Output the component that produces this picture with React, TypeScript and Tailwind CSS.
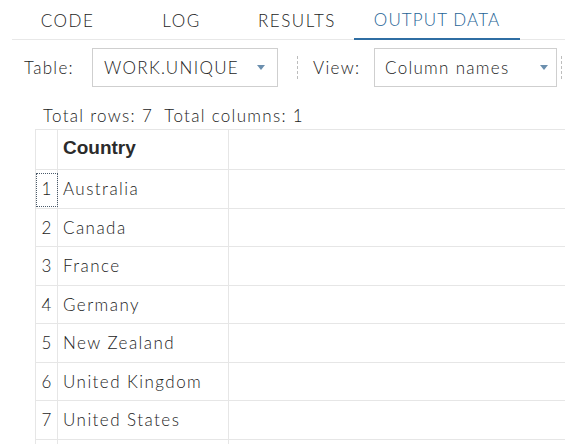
import React from "react";

const rows = [
  "Australia",
  "Canada",
  "France",
  "Germany",
  "New Zealand",
  "United Kingdom",
  "United States",
];

function Arrow() {
  return (
    <svg width="8" height="5" viewBox="0 0 8 5" className="block">
      <path d="M0 0 L8 0 L4 5 Z" fill="#6b8fae" />
    </svg>
  );
}

export default function App() {
  const tabs = [
    { label: "CODE", w: "w-[111px]" },
    { label: "LOG", w: "w-[117px]" },
    { label: "RESULTS", w: "w-[114px]" },
    { label: "OUTPUT DATA", w: "w-[166px]", active: true },
  ];
  return (
    <div
      className="w-[565px] h-[444px] overflow-hidden bg-white text-[#1c1c1c] font-[300]"
      style={{ fontFamily: "Lato, 'Noto Sans', sans-serif" }}
    >
      {/* Tabs */}
      <div className="ml-[12px] flex h-[40px] border-b border-[#e8e8e8]">
        {tabs.map((t) => (
          <div
            key={t.label}
            className={
              t.active
                ? `${t.w} flex items-center justify-center text-[17px] tracking-[1.1px] text-[#1f6496] border-b-2 border-[#2f6ea3] -mb-px pt-[2px]`
                : `${t.w} flex items-center justify-center text-[17px] tracking-[1.5px] text-[#1c1c1c] pt-[2px]`
            }
          >
            {t.label}
          </div>
        ))}
      </div>

      {/* Toolbar */}
      <div className="flex items-center h-[39px] mt-[8px] pl-[24px] tracking-[1.3px]">
        <span className="text-[17px] text-[#1c1c1c] w-[68px]">Table:</span>
        <div className="flex items-center justify-between w-[186px] h-[39px] border border-[#cfcfcf] pl-[11px] pr-[12px]">
          <span className="text-[17px] text-[#1c1c1c]">WORK.UNIQUE</span>
          <Arrow />
        </div>
        <div className="ml-[19px] h-[23px] border-l border-dashed border-[#bdbdbd]" />
        <span className="ml-[15px] text-[17px] text-[#1c1c1c] w-[61px]">View:</span>
        <div className="flex items-center justify-between w-[183px] h-[39px] border border-[#cfcfcf] pl-[10px] pr-[8px]">
          <span className="text-[17px] text-[#1c1c1c]">Column names</span>
          <Arrow />
        </div>
        <div className="ml-[4px] h-[23px] border-l border-dashed border-[#bdbdbd]" />
      </div>

      {/* Totals */}
      <div className="mt-[18px] pl-[43px] h-[20px] flex items-center text-[17px] text-[#1c1c1c] leading-none tracking-[1.3px]">
        Total rows: 7&nbsp;&nbsp;Total columns: 1
      </div>

      {/* Table */}
      <div className="ml-[35px] mt-[4px] w-[600px] border-t border-l border-[#e6e6e6]">
        <div className="flex h-[40px] border-b border-[#e6e6e6]">
          <div className="w-[22px] border-r border-[#e6e6e6]" />
          <div
            className="w-[171px] border-r border-[#e6e6e6] pl-[5px] pt-[4px] text-[19px] font-bold text-[#2b2b2b]"
            style={{ fontFamily: "'Liberation Sans', Arial, sans-serif" }}
          >
            Country
          </div>
          <div className="flex-1" />
        </div>
        {rows.map((r, i) => (
          <div key={r} className="flex h-[38.5px] border-b border-[#e6e6e6]">
            <div className="relative w-[22px] border-r border-[#e6e6e6] flex items-center justify-center text-[17px] text-[#1c1c1c]">
              {i === 0 && (
                <div className="absolute left-0 right-[-1px] top-[3px] bottom-[1px] border border-dotted border-[#4a5a6a]" />
              )}
              {i + 1}
            </div>
            <div className="w-[171px] border-r border-[#e6e6e6] pl-[5px] flex items-center text-[17px] text-[#1c1c1c] tracking-[1.45px]">
              {r}
            </div>
            <div className="flex-1" />
          </div>
        ))}
        <div className="flex h-[20px]">
          <div className="w-[22px] border-r border-[#e6e6e6]" />
          <div className="w-[171px] border-r border-[#e6e6e6]" />
        </div>
      </div>
    </div>
  );
}
